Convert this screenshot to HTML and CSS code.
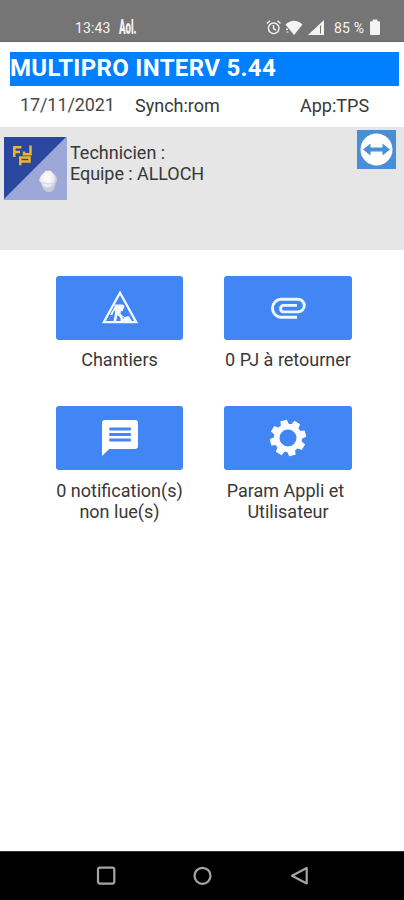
FILE: index.html
```
<!DOCTYPE html>
<html lang="fr">
<head>
<meta charset="utf-8">
<title>MULTIPRO INTERV</title>
<link rel="stylesheet" href="styles.css">
</head>
<body>
<header class="status">
  <span class="clock">13:43</span>
  <span class="aol">Aol.</span>
  <svg class="sys" width="115" height="20" viewBox="265 18 115 20" fill="#f4f4f4">
    <g fill="none" stroke="#f4f4f4" stroke-width="1.4"><circle cx="273.700" cy="28.300" r="5.300"/><path d="M273.500 25v3.700l2.500 1.500M267 23.500l3-2.700M277.500 20.800l3 2.700"/></g>
    <path d="M285.500 24.500Q294 17 302.500 24.500L294 35Z"/><path d="M286 28.500h2v1.500h-2zM286.500 31.500h2v1h-2z"/>
    <path d="M308 35L324 20V35Z"/><path d="M320.500 25.500V33.500" stroke="#777" stroke-width="1"/>
    <path d="M371 21.300h1.700V19.500h4.600v1.800h1.700a1 1 0 0 1 1 1V34a1 1 0 0 1-1 1h-8a1 1 0 0 1-1-1V22.300a1 1 0 0 1 1-1z"/>
  </svg>
  <span class="percent">85 %</span>
</header>
<h1 class="title"><span>MULTIPRO INTERV 5.44</span></h1>
<div class="info"><span class="date">17/11/2021</span><span class="synch">Synch:rom</span><span class="app">App:TPS</span></div>
<section class="panel">
  <svg class="logo" width="63" height="63" viewBox="0 0 63 63">
    <path fill="#9da8d8" d="M0 0h63v63H0z"/><path fill="#29479f" d="M0 0h62L0 62z"/>
    <g fill="none" stroke="#f2b32d" stroke-width="2.500"><path d="M17.500 10.300H10.300V20M10 15h6M26.500 8.500V17.300H20V14.500M15 20.500h10.500V24.500H16.500M16.300 19.300v9"/></g>
    <defs><radialGradient id="hat" cx=".45" cy=".35"><stop offset="0" stop-color="#fff"/><stop offset=".7" stop-color="#eceef2"/><stop offset="1" stop-color="#c6cbd9"/></radialGradient></defs>
    <path fill="url(#hat)" d="M35 44Q35.500 39 40 35.700l1.500-2h5.500l1.500 2q5 3.300 4.500 8.300l-1.500 2.500Q51 55 45 55.300 39 55 37.500 46.500z"/>
    <path fill="none" stroke="#ccd1df" stroke-width=".8" d="M37 45.500Q44.500 48.500 51.500 45.500"/>
  </svg>
  <div class="who"><div class="tech">Technicien :</div><div class="team">Equipe : ALLOCH</div></div>
  <svg class="remote" width="39" height="39" viewBox="0 0 39 39"><path fill="#478fd7" d="M0 0h39v39H0z"/><circle cx="19.500" cy="19.500" r="16" fill="#fff"/><path fill="#478fd7" d="M6 19.500l7.500-6v4h12v-4l7.500 6-7.500 6v-4h-12v4z"/></svg>
</section>
<main class="grid">
  <div class="tile"><div class="button">
    <svg width="38" height="38" viewBox="0 0 38 38"><path fill="none" stroke="#f5f8ff" stroke-width="2.300" d="M19 3.800L35.200 33.200H2.800z"/><path fill="#f5f8ff" d="M13.500 15.500h8.500l1.500 1.800-2 5.200-1.500-.7-.5 2.700 2.500 4.500-.5 3.500h-2V29l-2.800-3-1.700 6.500h-2.500l1.500-8.500zM21 32q1.500-4 4.500-4.500l2.500-.3 3 5zM9 26l4.500-8 1 .7-3.200 7.300z"/><path stroke="#f5f8ff" stroke-width="1" d="M13 21L27 31"/></svg>
  </div><p><span class="l1">Chantiers</span></p></div>
  <div class="tile"><div class="button">
    <svg width="38" height="38" viewBox="0 0 38 38"><path fill="none" stroke="#f0f8ff" stroke-width="2.900" d="M28 28.200H11.500A9 9 0 0 1 11.500 10.300H29A6.300 6.300 0 0 1 29 22.900H14A3.400 3.400 0 0 1 14 16.400H28"/></svg>
  </div><p><span class="l2">0 PJ à retourner</span></p></div>
  <div class="tile"><div class="button">
    <svg width="38" height="38" viewBox="0 0 38 38"><path fill="#fff" d="M4.300 1h29.400q3.300 0 3.300 3.300v22.500q0 3.300-3.300 3.300H8.200L1 37V4.300Q1 1 4.300 1z"/><path stroke="#4285f4" stroke-width="3" d="M8.300 10h21.500M8.300 15.500h21.500M8.300 21h21.500"/></svg>
  </div><p><span class="l3">0 notification(s)</span><span class="l4">non lue(s)</span></p></div>
  <div class="tile"><div class="button">
    <svg width="38" height="38" viewBox="-19 -19 38 38"><g transform="rotate(-14)" fill="#fff"><circle r="11.300" fill="none" stroke="#fff" stroke-width="5.600"/><g id="teeth"><path id="tooth" d="M-4.300-12L-3.300-18H3.300L4.300-12V0z"/><use href="#tooth" transform="rotate(45)"/><use href="#tooth" transform="rotate(90)"/><use href="#tooth" transform="rotate(135)"/></g><use href="#teeth" transform="rotate(180)"/></g><circle r="8.500" fill="#4285f4"/></svg>
  </div><p><span class="l5">Param Appli et</span><span class="l6">Utilisateur</span></p></div>
</main>
<footer class="nav">
  <svg width="404" height="48" viewBox="0 852 404 48" fill="none" stroke="#a5a5a5" stroke-width="2.200"><rect x="98" y="867.600" width="16.300" height="16" rx="2"/><circle cx="202.500" cy="875.800" r="8"/><path stroke-linejoin="round" d="M306.700 868v15.500L292 875.700z"/></svg>
</footer>
</body>
</html>
```
FILE: styles.css
```
* { box-sizing: border-box; }
body { margin: 0; width: 404px; height: 900px; background: #fff; color: #383838; font: 18px/21px Roboto, sans-serif; display: flex; flex-direction: column; overflow: hidden; }
span, .tech, .team { white-space: nowrap; }
.status { height: 42px; flex: none; background: #757575; border-bottom: 1px solid #666; color: #f4f4f4; display: grid; grid-template-columns: 44px 146px 115px; padding: 18px 0 0 75px; font-size: 14px; line-height: 20px; }
.clock { letter-spacing: .1px; }
.aol { width: 40px; font-size: 20px; font-weight: 900; line-height: 18px; transform: scaleX(.48); transform-origin: left; }
.sys { grid-column: 3; grid-row: 1; }
.percent { grid-column: 3; grid-row: 1; padding-left: 69px; letter-spacing: .2px; }
.title { width: 389px; height: 34px; flex: none; margin: 10px 0 0 10px; background: #0080ff; color: #fff; font-size: 24px; line-height: 32px; font-weight: 700; letter-spacing: .33px; }
.info { height: 41px; flex: none; padding: 8px 0 0 20px; display: grid; grid-template-columns: 115px 165px 90px; }
.date { color: #484848; letter-spacing: -.1px; }
.synch, .app { padding-top: 1px; }
.panel { height: 123px; flex: none; background: #e6e6e6; padding: 10px 0 0 4px; display: flex; align-items: flex-start; }
.who { width: 290px; padding: 5px 0 0 3px; }
.team { letter-spacing: -.06px; }
.remote { margin-top: -7px; }
.grid { flex: 1; display: grid; grid-template-columns: 127px 128px; column-gap: 41px; grid-template-rows: 130px 130px; align-content: start; padding: 26px 0 0 56px; }
.button { height: 64px; border-radius: 3px; background: #4285f4; display: flex; align-items: center; justify-content: center; }
.tile p { margin: 9px -10px 0; display: flex; flex-direction: column; align-items: center; }
.tile:nth-child(n + 3) p { margin-top: 10px; }
.l5 { margin-right: 5px; }
.nav { height: 49px; flex: none; background: #000; border-top: 1px solid #333; }
.nav svg { display: block; }
```
